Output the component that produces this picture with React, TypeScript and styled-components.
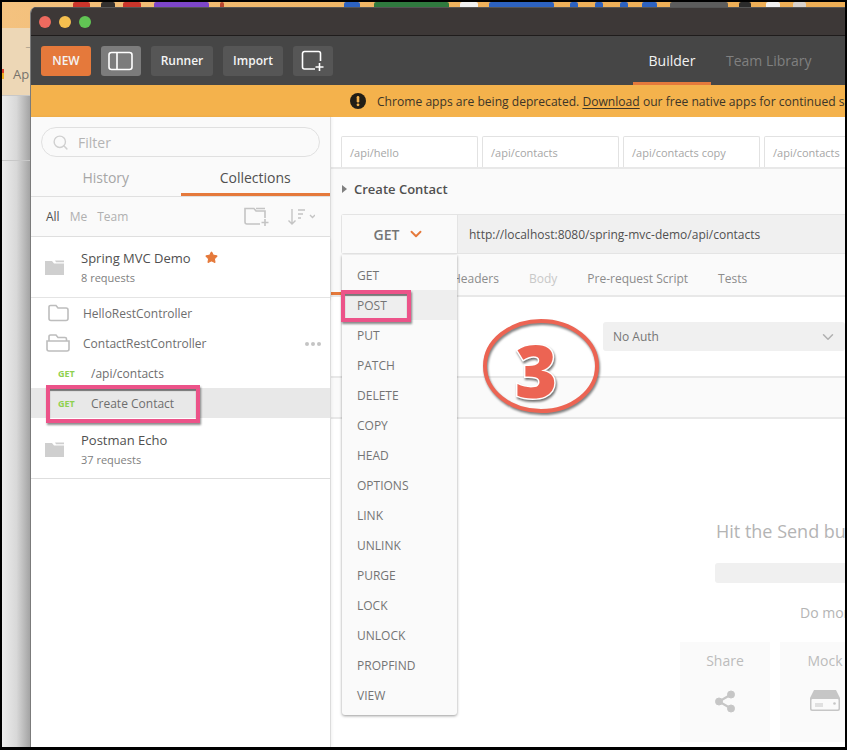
import React from 'react';
import styled, { createGlobalStyle } from 'styled-components';
import { ChevronDown, Search, Star } from 'lucide-react';

const GlobalStyle = createGlobalStyle`
  html, body {
    margin: 0;
    padding: 0;
    background: #000;
  }
  * {
    box-sizing: border-box;
  }
`;

const Shot = styled.div`
  width: 847px;
  height: 750px;
  padding: 2px 2px 3px 2px;
  background: #000;
  font-family: "Open Sans", "Liberation Sans", sans-serif;
  overflow: hidden;
`;

const Desktop = styled.div`
  position: relative;
  width: 100%;
  height: 100%;
  overflow: hidden;
  display: flex;
  flex-direction: column;
`;

/* browser behind the app window */
const BookmarkStrip = styled.div`
  height: 26px;
  flex: none;
  display: flex;
  background: linear-gradient(90deg, #f4c27f 0%, #eeb05a 60%, #eeae55 100%);
`;

const Blob = styled.span<{ $x: number; $w: number; $c: string }>`
  height: 5px;
  flex: none;
  width: ${(p) => p.$w}px;
  margin-left: ${(p) => p.$x}px;
  background: ${(p) => p.$c};
  border-radius: 2px 2px 0 0;
`;

const BrowserBar = styled.div`
  height: 67px;
  flex: none;
  display: flex;
  flex-direction: column;
  gap: 11px;
  padding-top: 8px;
  background: #edd7b6;
  color: #77736c;
  font-size: 13px;
  line-height: 18px;
`;

const NavArrow = styled.div`
  padding-left: 21px;
  font-size: 14px;
  color: #8a8478;
`;

const BookmarkRow = styled.div`
  display: flex;
  align-items: center;
  gap: 9px;
`;

const BookmarkGlyph = styled.span`
  width: 2px;
  height: 10px;
  background: linear-gradient(180deg, #d8402c 0%, #d8402c 45%, #f0b020 45%, #f0b020 100%);
`;

const PageShade = styled.div<{ $h?: number }>`
  flex: ${(p) => (p.$h ? 'none' : '1')};
  height: ${(p) => (p.$h ? `${p.$h}px` : 'auto')};
  border-top: 1px solid #c8c8c8;
  width: 29px;
  background: linear-gradient(90deg, #ececec 0%, #d8d8d8 50%, #a0a0a0 100%);
`;

const AppWindow = styled.div`
  position: absolute;
  left: 28px;
  top: 5px;
  right: 0;
  bottom: 0;
  display: flex;
  flex-direction: column;
  background: #fff;
  border-left: 1px solid #7b7b7b;
  border-radius: 6px 0 0 0;
  overflow: hidden;
`;

const TitleBar = styled.div`
  height: 29px;
  flex: none;
  display: flex;
  align-items: center;
  gap: 8px;
  padding: 0 0 0 8px;
  background: #3d3837;
  border-top: 1px solid #555;
  border-bottom: 1px solid #1f1c1c;
`;

const Light = styled.span<{ $c: string }>`
  width: 12px;
  height: 12px;
  border-radius: 50%;
  background: ${(p) => p.$c};
`;

const Toolbar = styled.div`
  height: 49px;
  flex: none;
  display: flex;
  align-items: center;
  gap: 10px;
  padding: 0 0 0 10px;
  background: #464646;
  position: relative;
`;

const ToolButton = styled.button<{ $w: number; $bg?: string }>`
  width: ${(p) => p.$w}px;
  height: 30px;
  padding: 0;
  border: 0;
  border-radius: 3px;
  background: ${(p) => p.$bg || '#565656'};
  color: #f4f4f4;
  font-family: inherit;
  font-size: 12px;
  font-weight: 600;
  display: flex;
  align-items: center;
  justify-content: center;
`;

const WorkspaceTabs = styled.div`
  display: flex;
  align-self: stretch;
  margin-left: 290px;
  gap: 15px;
`;

const WorkspaceTab = styled.div<{ $active?: boolean }>`
  width: ${(p) => (p.$active ? '78px' : 'auto')};
  display: flex;
  align-items: center;
  justify-content: center;
  padding-top: 2px;
  font-size: 14px;
  color: ${(p) => (p.$active ? '#f2f2f2' : '#808080')};
  border-bottom: 3px solid ${(p) => (p.$active ? '#e5793b' : 'transparent')};
  white-space: nowrap;
`;

const Banner = styled.div`
  height: 32px;
  flex: none;
  display: flex;
  align-items: center;
  gap: 11px;
  padding-left: 319px;
  background: #f4b24c;
  color: #3c3528;
  font-size: 12.1px;
  white-space: nowrap;
  overflow: hidden;

  svg,
  span {
    flex: none;
  }
  u {
    text-underline-offset: 2px;
  }
`;

const Body = styled.div`
  flex: 1;
  min-height: 0;
  display: flex;
`;

/* left panel */
const Sidebar = styled.aside`
  width: 300px;
  flex: none;
  display: flex;
  flex-direction: column;
  background: #fff;
  border-right: 1px solid #dcdcdc;
  box-shadow: 1px 0 3px rgba(0, 0, 0, 0.06);
  z-index: 1;
`;

const FilterArea = styled.div`
  flex: none;
  background: #fafafa;
  padding: 10px 10px 0;
`;

const FilterBox = styled.div`
  width: 279px;
  height: 30px;
  display: flex;
  align-items: center;
  gap: 9px;
  padding: 0 10px;
  border: 1px solid #e0e0e0;
  border-radius: 15px;
  color: #b4b4b4;
  font-size: 14px;
`;

const SideTabs = styled.div`
  height: 40px;
  flex: none;
  display: flex;
  background: #fafafa;
  border-bottom: 1px solid #e0e0e0;
`;

const SideTab = styled.div<{ $active?: boolean }>`
  flex: 1;
  display: flex;
  align-items: center;
  justify-content: center;
  font-size: 14px;
  padding-top: 5px;
  color: ${(p) => (p.$active ? '#505050' : '#a6a6a6')};
  border-bottom: 3px solid ${(p) => (p.$active ? '#e5793b' : 'transparent')};
`;

const ScopeRow = styled.div`
  height: 40px;
  flex: none;
  display: flex;
  align-items: center;
  padding: 0 10px 0 15px;
  background: #fafafa;
  border-bottom: 1px solid #e0e0e0;
  font-size: 12px;
  color: #b0b0b0;
`;

const Scope = styled.span<{ $on?: boolean }>`
  margin-right: 10px;
  color: ${(p) => (p.$on ? '#505050' : '#b0b0b0')};
`;

const ScopeIcons = styled.div`
  margin-left: auto;
  display: flex;
  align-items: center;
  gap: 17px;
  padding-right: 5px;
  color: #bdbdbd;
`;

const CollectionRow = styled.div<{ $open?: boolean }>`
  height: 61px;
  flex: none;
  display: flex;
  align-items: center;
  gap: 17px;
  padding: ${(p) => (p.$open ? '0' : '3px')} 0 0 14px;
  background: #fff;
  position: relative;
  border-bottom: 1px solid ${(p) => (p.$open ? '#e4e4e4' : '#dedede')};
  box-shadow: ${(p) => (p.$open ? '0 2px 3px rgba(0, 0, 0, 0.1)' : 'none')};
`;

const CollectionName = styled.div`
  font-size: 13px;
  line-height: 20px;
  color: #505050;
  display: flex;
  align-items: center;
  gap: 14px;
`;

const CollectionMeta = styled.div`
  font-size: 11px;
  line-height: 18px;
  color: #808080;
  margin-top: 1px;
`;

const TreeRow = styled.div<{ $selected?: boolean; $indent: number; $gap: number }>`
  height: 30px;
  flex: none;
  display: flex;
  align-items: center;
  position: relative;
  gap: ${(p) => p.$gap}px;
  padding-left: ${(p) => p.$indent}px;
  font-size: 12px;
  color: #6e6e6e;
  background: ${(p) => (p.$selected ? '#e8e8e8' : '#fff')};
`;

const MethodTag = styled.span`
  font-size: 9px;
  font-weight: 700;
  color: #8fd14f;
  width: 18px;
`;

const MoreDots = styled.span`
  position: absolute;
  right: 9px;
  top: 14px;
  display: flex;
  gap: 2px;
`;

const Dot = styled.i`
  width: 4px;
  height: 4px;
  border-radius: 50%;
  background: #c4c4c4;
`;

/* right panel */
const Main = styled.main`
  flex: 1;
  min-width: 0;
  display: flex;
  flex-direction: column;
  background: #fff;
  overflow: hidden;
`;

const RequestTabs = styled.div`
  height: 52px;
  flex: none;
  display: flex;
  align-items: flex-end;
  gap: 4px;
  padding-left: 10px;
  border-bottom: 2px solid #e8e8e8;
`;

const RequestTab = styled.div`
  width: 137px;
  height: 31px;
  flex: none;
  padding: 0 8px;
  display: flex;
  align-items: center;
  font-size: 11px;
  color: #a6a6a6;
  border: 1px solid #e2e2e2;
  border-bottom: 0;
  border-radius: 2px 2px 0 0;
`;

const Editor = styled.section`
  height: 128px;
  flex: none;
  display: flex;
  flex-direction: column;
  background: #fafafa;
  border-bottom: 2px solid #e8e8e8;
`;

const RequestTitle = styled.div`
  height: 45px;
  flex: none;
  display: flex;
  align-items: center;
  gap: 7px;
  padding: 0 0 5px 11px;
  font-size: 13px;
  font-weight: 600;
  color: #505050;
`;

const Caret = styled.span`
  width: 0;
  height: 0;
  border-left: 5px solid #808080;
  border-top: 4px solid transparent;
  border-bottom: 4px solid transparent;
`;

const UrlRow = styled.div`
  position: relative;
  height: 40px;
  flex: none;
  display: flex;
  margin-left: 10px;
  background: #f0f0f0;
  border: 1px solid #e4e4e4;
  border-right: 0;
  border-radius: 3px 0 0 3px;
`;

const MethodSelect = styled.div`
  width: 116px;
  flex: none;
  display: flex;
  align-items: center;
  justify-content: center;
  gap: 8px;
  background: #fafafa;
  border-right: 1px solid #e4e4e4;
  color: #747474;
  font-size: 14px;
  font-weight: 600;
`;

const UrlText = styled.div`
  padding-left: 11px;
  display: flex;
  align-items: center;
  font-size: 12px;
  color: #505050;
`;

const MethodMenu = styled.ul`
  position: absolute;
  left: 0;
  top: 40px;
  width: 115px;
  margin: 0;
  padding: 5px 0;
  list-style: none;
  background: #fafafa;
  border-radius: 0 0 3px 3px;
  box-shadow: 0 1px 3px rgba(0, 0, 0, 0.4);
  z-index: 3;
`;

const MenuItem = styled.li<{ $hover?: boolean }>`
  position: relative;
  height: 30px;
  display: flex;
  align-items: center;
  padding-left: 15px;
  font-size: 12px;
  color: #747474;
  background: ${(p) => (p.$hover ? '#eeeeee' : 'transparent')};
`;

const Marker = styled.span<{ $l: number; $t: number; $w: number; $h: number }>`
  position: absolute;
  left: ${(p) => p.$l}px;
  top: ${(p) => p.$t}px;
  width: ${(p) => p.$w}px;
  height: ${(p) => p.$h}px;
  border: 4px solid #ec5389;
  box-shadow: 1px 2px 2px rgba(0, 0, 0, 0.45), inset 0 2px 1px rgba(0, 0, 0, 0.5);
  z-index: 4;
  pointer-events: none;
`;

const SubTabs = styled.div`
  flex: 1;
  display: flex;
  align-items: stretch;
  margin-top: 8px;
  font-size: 12px;
`;

const SubTab = styled.div<{ $active?: boolean; $muted?: boolean; $w?: number }>`
  flex: none;
  width: ${(p) => (p.$w ? `${p.$w}px` : 'auto')};
  margin-right: ${(p) => (p.$w ? '10px' : '30px')};
  padding-top: 3px;
  display: flex;
  align-items: center;
  color: ${(p) => (p.$muted ? '#c8c8c8' : '#8c8c8c')};
  border-bottom: 3px solid ${(p) => (p.$active ? '#e5793b' : 'transparent')};
`;

const AuthPane = styled.div`
  height: 81px;
  flex: none;
  padding: 25px 0 0 272px;
  border-bottom: 2px solid #e8e8e8;
`;

const AuthSelect = styled.div`
  width: 242px;
  height: 29px;
  display: flex;
  align-items: center;
  justify-content: space-between;
  padding: 0 8px 0 10px;
  border-radius: 3px;
  background: #f0f0f0;
  color: #767676;
  font-size: 12px;
`;

const Band = styled.div`
  height: 41px;
  flex: none;
  background: #fafafa;
  border-bottom: 2px solid #e8e8e8;
`;

const Response = styled.div`
  flex: 1;
  min-height: 0;
  display: flex;
  flex-direction: column;
  padding-top: 100px;
`;

const HitSend = styled.div`
  margin-left: 385px;
  height: 24px;
  font-size: 18px;
  line-height: 24px;
  color: #b4b4b4;
  white-space: nowrap;
`;

const HintBar = styled.div`
  margin: 20px 0 0 384px;
  height: 20px;
  flex: none;
  border-radius: 3px 0 0 3px;
  background: #f0f0f0;
`;

const DoMore = styled.div`
  margin: 20px 0 0 469px;
  height: 20px;
  font-size: 14px;
  line-height: 20px;
  color: #b4b4b4;
  white-space: nowrap;
`;

const Cards = styled.div`
  display: flex;
  gap: 10px;
  margin: 19px 0 0 349px;
`;

const Card = styled.div`
  width: 90px;
  height: 100px;
  flex: none;
  display: flex;
  flex-direction: column;
  align-items: center;
  gap: 20px;
  padding-top: 9px;
  background: #fafafa;
  color: #bcbcbc;
  font-size: 14px;
`;

/* hand-drawn callout over the screenshot */
const Callout = styled.svg`
  position: absolute;
  left: 480px;
  top: 317px;
  z-index: 5;
  overflow: visible;
`;

const CalloutRing = styled.ellipse`
  fill: none;
  stroke: #ec6453;
  stroke-width: 4px;
  filter: drop-shadow(1px 2px 1px rgba(0, 0, 0, 0.5));
`;

const CalloutDigit = styled.text`
  font-family: "Open Sans", "Liberation Sans", sans-serif;
  font-size: 72px;
  font-weight: 800;
  fill: #ec6453;
  stroke: #fff;
  stroke-width: 3px;
  paint-order: stroke;
  filter: drop-shadow(1px 2px 1px rgba(0, 0, 0, 0.55));
`;

const strip = [
  { x: 71, w: 17, c: '#c9352b' },
  { x: 11, w: 14, c: '#33302e' },
  { x: 8, w: 18, c: '#c9352b' },
  { x: 13, w: 55, c: '#7d46c9' },
  { x: 11, w: 4, c: '#b8452d' },
  { x: 120, w: 16, c: '#2d62c0' },
  { x: 14, w: 75, c: '#2f7a3e' },
  { x: 11, w: 18, c: '#f2f2f2' },
  { x: 11, w: 65, c: '#2d62c0' },
  { x: 16, w: 8, c: '#2d62c0' },
  { x: 17, w: 8, c: '#2d62c0' },
  { x: 17, w: 8, c: '#2d62c0' },
  { x: 14, w: 15, c: '#2d62c0' },
  { x: 13, w: 58, c: '#5c5c5c' },
  { x: 11, w: 12, c: '#2b2b2b' },
  { x: 15, w: 14, c: '#f2f2f2' },
  { x: 13, w: 13, c: '#d9d2cc' },
];

const methods = ['GET', 'POST', 'PUT', 'PATCH', 'DELETE', 'COPY', 'HEAD', 'OPTIONS', 'LINK', 'UNLINK', 'PURGE', 'LOCK', 'UNLOCK', 'PROPFIND', 'VIEW'];

const SolidFolder = () => (
  <svg width="19" height="15" viewBox="0 0 19 15" fill="#cfcfcf">
    <path d="M0 1h7l2 2.5h10V15H0z" />
    <path d="M10 0.5h9v1.8h-8z" />
  </svg>
);

const LayoutIcon = () => (
  <svg width="26" height="20" viewBox="0 0 26 20" fill="none" stroke="#fff" strokeWidth="1.6">
    <rect x="1" y="1.5" width="23" height="17" rx="2.5" />
    <path d="M9 1.5v17" />
  </svg>
);

const NewWindowIcon = () => (
  <svg width="24" height="22" viewBox="0 0 24 22" fill="none" stroke="#fff" strokeWidth="1.6">
    <path d="M14 19H3.5A2 2 0 0 1 1.5 17V3.5a2 2 0 0 1 2-2h14a2 2 0 0 1 2 2V11" />
    <path d="M18.5 13v8M14.5 17h8" />
  </svg>
);

const NewFolderIcon = () => (
  <svg width="26" height="20" viewBox="0 0 26 20" fill="none" stroke="#c4c4c4" strokeWidth="1.6">
    <path d="M16 17H3a2 2 0 0 1-2-2V1.5h9l2 2.5h9V11" />
    <path d="M21 12v7M17.5 15.500h7" />
    <path d="M12 1.500h9" />
  </svg>
);

const SortIcon = () => (
  <svg width="28" height="18" viewBox="0 0 28 18" fill="none" stroke="#c4c4c4" strokeWidth="1.4">
    <path d="M5 1v15M1.500 12.500 5 16l3.500-3.500" />
    <path d="M11 2h7M11 6h5M11 10h3" />
    <path d="m23 7 2.500 2.500L28 7" />
  </svg>
);

const FolderOutline = () => (
  <svg width="21" height="18" viewBox="0 0 21 18" fill="none" stroke="#bdbdbd" strokeWidth="1.6">
    <path d="M1 3a1.500 1.500 0 0 1 1.500-1.500H8l2 2.500h8a2 2 0 0 1 2 2v8.500a2 2 0 0 1-2 2H3a2 2 0 0 1-2-2z" />
  </svg>
);

const FolderOpen = () => (
  <svg width="24" height="18" viewBox="0 0 24 18" fill="none" stroke="#bdbdbd" strokeWidth="1.6">
    <path d="M3 7V2.500A1.500 1.500 0 0 1 4.500 1H10l2 2.500h7a1.500 1.500 0 0 1 1.500 1.500v2" />
    <path d="M1 7h22v8a2 2 0 0 1-2 2H3a2 2 0 0 1-2-2z" />
  </svg>
);

const WarnIcon = () => (
  <svg width="16" height="16" viewBox="0 0 16 16">
    <circle cx="8" cy="8" r="8" fill="#221e16" />
    <rect x="6.700" y="3" width="2.600" height="6.500" rx="1.200" fill="#f4b24c" />
    <circle cx="8" cy="11.800" r="1.400" fill="#f4b24c" />
  </svg>
);

const ShareIcon = () => (
  <svg width="20" height="23" viewBox="0 0 20 23" fill="#c6c6c6" stroke="#c6c6c6">
    <circle cx="16" cy="4.500" r="3.500" />
    <circle cx="4" cy="11.500" r="3.500" />
    <circle cx="16" cy="18.500" r="3.500" />
    <path d="M16 4.500 4 11.500l12 7" fill="none" strokeWidth="2.200" />
  </svg>
);

const MockIcon = () => (
  <svg width="30" height="21" viewBox="0 0 30 21">
    <path d="M4 0h22l4 8v11a2 2 0 0 1-2 2H2a2 2 0 0 1-2-2V8z" fill="#c6c6c6" />
    <rect x="1.500" y="9" width="27" height="10.500" rx="1" fill="#fafafa" />
    <path d="M6 13v4M8 13v4M10 13v4M12 13v4" stroke="#c6c6c6" />
    <circle cx="24.500" cy="13.500" r="1.300" fill="#c6c6c6" />
  </svg>
);

const App: React.FC = () => {
  return (
    <Shot>
      <GlobalStyle />
      <Desktop>
        <BookmarkStrip>
          {strip.map((b, i) => (
            <Blob key={i} $x={b.x} $w={b.w} $c={b.c} />
          ))}
        </BookmarkStrip>
        <BrowserBar>
          <NavArrow>→</NavArrow>
          <BookmarkRow><BookmarkGlyph />App</BookmarkRow>
        </BrowserBar>
        <PageShade $h={65} />
        <PageShade />

        <AppWindow>
          <TitleBar>
            <Light $c="#ee6a5f" />
            <Light $c="#f5bf4f" />
            <Light $c="#61c554" />
          </TitleBar>

          <Toolbar>
            <ToolButton $w={50} $bg="#e5793b">NEW</ToolButton>
            <ToolButton $w={40} $bg="#7c7c7c"><LayoutIcon /></ToolButton>
            <ToolButton $w={62}>Runner</ToolButton>
            <ToolButton $w={60}>Import</ToolButton>
            <ToolButton $w={40}><NewWindowIcon /></ToolButton>
            <WorkspaceTabs>
              <WorkspaceTab $active>Builder</WorkspaceTab>
              <WorkspaceTab>Team Library</WorkspaceTab>
            </WorkspaceTabs>
          </Toolbar>

          <Banner>
            <WarnIcon />
            <span>Chrome apps are being deprecated. <u>Download</u> our free native apps for continued support and better performance.</span>
          </Banner>

          <Body>
            <Sidebar>
              <FilterArea>
                <FilterBox>
                  <Search size={17} color="#d0d0d0" />
                  Filter
                </FilterBox>
              </FilterArea>
              <SideTabs>
                <SideTab>History</SideTab>
                <SideTab $active>Collections</SideTab>
              </SideTabs>
              <ScopeRow>
                <Scope $on>All</Scope>
                <Scope>Me</Scope>
                <Scope>Team</Scope>
                <ScopeIcons>
                  <NewFolderIcon />
                  <SortIcon />
                </ScopeIcons>
              </ScopeRow>

              <CollectionRow $open>
                <SolidFolder />
                <div>
                  <CollectionName>
                    Spring MVC Demo
                    <Star size={13} color="#e5793b" fill="#e5793b" />
                  </CollectionName>
                  <CollectionMeta>8 requests</CollectionMeta>
                </div>
              </CollectionRow>
              <TreeRow $indent={17} $gap={14}><FolderOutline />HelloRestController</TreeRow>
              <TreeRow $indent={15} $gap={13}>
                <FolderOpen />
                ContactRestController
                <MoreDots><Dot /><Dot /><Dot /></MoreDots>
              </TreeRow>
              <TreeRow $indent={27} $gap={15}><MethodTag>GET</MethodTag>/api/contacts</TreeRow>
              <TreeRow $indent={27} $gap={15} $selected>
                <MethodTag>GET</MethodTag>
                Create Contact
                <Marker $l={15} $t={-3} $w={154} $h={38} />
              </TreeRow>
              <CollectionRow>
                <SolidFolder />
                <div>
                  <CollectionName>Postman Echo</CollectionName>
                  <CollectionMeta>37 requests</CollectionMeta>
                </div>
              </CollectionRow>
            </Sidebar>

            <Main>
              <RequestTabs>
                <RequestTab>/api/hello</RequestTab>
                <RequestTab>/api/contacts</RequestTab>
                <RequestTab>/api/contacts copy</RequestTab>
                <RequestTab>/api/contacts</RequestTab>
              </RequestTabs>

              <Editor>
                <RequestTitle><Caret />Create Contact</RequestTitle>
                <UrlRow>
                  <MethodSelect>
                    GET
                    <ChevronDown size={18} color="#e5793b" strokeWidth={2.5} />
                  </MethodSelect>
                  <UrlText>http://localhost:8080/spring-mvc-demo/api/contacts</UrlText>
                  <MethodMenu>
                    {methods.map((m) => (
                      <MenuItem key={m} $hover={m === 'POST'}>
                        {m}
                        {m === 'POST' && <Marker $l={-1} $t={0} $w={70} $h={32} />}
                      </MenuItem>
                    ))}
                  </MethodMenu>
                </UrlRow>
                <SubTabs>
                  <SubTab $active $w={111} />
                  <SubTab>Headers</SubTab>
                  <SubTab $muted>Body</SubTab>
                  <SubTab>Pre-request Script</SubTab>
                  <SubTab>Tests</SubTab>
                </SubTabs>
              </Editor>

              <AuthPane>
                <AuthSelect>
                  No Auth
                  <ChevronDown size={18} color="#b0b0b0" />
                </AuthSelect>
              </AuthPane>
              <Band />

              <Response>
                <HitSend>Hit the Send button to get a response.</HitSend>
                <HintBar />
                <DoMore>Do more with this request</DoMore>
                <Cards>
                  <Card>Share<ShareIcon /></Card>
                  <Card>Mock<MockIcon /></Card>
                </Cards>
              </Response>
            </Main>
          </Body>
        </AppWindow>

        <Callout width="118" height="94" viewBox="0 0 118 94">
          <CalloutRing cx="59" cy="47" rx="56" ry="45" />
          <CalloutDigit x="54" y="79" textAnchor="middle">3</CalloutDigit>
        </Callout>
      </Desktop>
    </Shot>
  );
};

export default App;
